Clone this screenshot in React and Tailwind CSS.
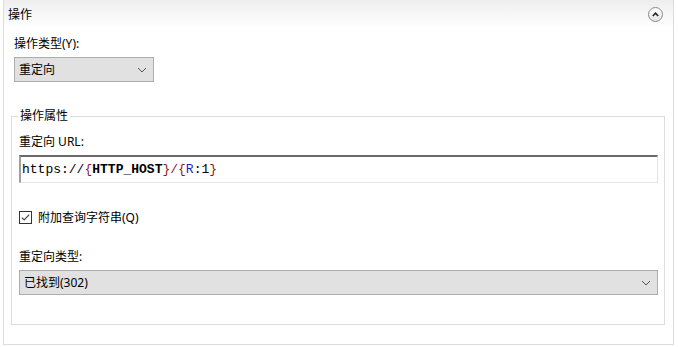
import React from 'react';

const Chevron = ({ className = '' }) => (
  <svg width="10" height="6" viewBox="0 0 10 6" className={className}>
    <path d="M1 1 L5 5 L9 1" fill="none" stroke="#555" strokeWidth="1" />
  </svg>
);

const Select = ({ value, className = '' }) => (
  <div className={`flex items-center justify-between h-[25px] bg-[#e1e1e1] border border-[#adadad] pl-[4px] pr-[6px] ${className}`}>
    <span className="text-[12px] text-black leading-none">{value}</span>
    <Chevron />
  </div>
);

export default function App() {
  return (
    <div
      className="w-[678px] h-[347px] bg-white overflow-hidden"
      style={{ fontFamily: '"Noto Sans", "Noto Sans CJK SC", sans-serif' }}
    >
      <div className="ml-[3px] w-[671px] h-[345px] border border-t-0 border-[#dcdcdc] flex flex-col">
        {/* header */}
        <div className="h-[28px] flex items-center justify-between pl-[4px] pr-[10px] bg-gradient-to-b from-[#eeeeee] to-white">
          <span className="text-[12px] text-black leading-none mt-[2px]">操作</span>
          <div className="w-[15px] h-[15px] rounded-full border border-[#8a8a8a] bg-gradient-to-b from-white to-[#e4e4e4] flex items-center justify-center">
            <svg width="7" height="5" viewBox="0 0 7 5">
              <path d="M0.8 4 L3.5 1.2 L6.2 4" fill="none" stroke="#222" strokeWidth="1.6" />
            </svg>
          </div>
        </div>

        <div className="pl-[10px] pt-[9px]">
          <div className="text-[12px] text-black leading-[14px]">操作类型(Y):</div>
          <Select value="重定向" className="w-[140px] mt-[6px]" />
        </div>

        {/* group box */}
        <div className="relative ml-[7px] mt-[34px] w-[654px] h-[209px] border border-[#dcdcdc]">
          <span className="absolute left-[6px] -top-[8px] bg-white px-[2px] text-[12px] text-black leading-[14px]">操作属性</span>
          <div className="pl-[7px] pr-[6px] pt-[18px]">
            <div className="text-[12px] text-black leading-[14px]">重定向 URL:</div>
            <div className="mt-[6px] h-[28px] border-t-2 border-l-2 border-t-[#696969] border-l-[#a0a0a0] border-r border-b border-r-[#e3e3e3] border-b-[#e3e3e3] flex items-center pl-[1px]">
              <span
                className="text-[13px] leading-none text-black whitespace-pre"
                style={{ fontFamily: '"Liberation Mono", monospace' }}
              >
                https://<span className="text-[#8b1a1a]">{'{'}</span>
                <span className="font-bold">HTTP_HOST</span>
                <span className="text-[#8b1a1a]">{'}/{'}</span>
                <span className="text-[#1f1fbf]">R</span>:1
                <span className="text-[#8b1a1a]">{'}'}</span>
              </span>
            </div>

            <div className="mt-[28px] flex items-center gap-[6px]">
              <svg width="13" height="13" viewBox="0 0 13 13">
                <rect x="0.5" y="0.5" width="12" height="12" fill="white" stroke="#333" />
                <path d="M2.8 6.6 L5.2 9 L10.2 3.6" fill="none" stroke="#444" strokeWidth="1.2" />
              </svg>
              <span className="text-[12px] text-black leading-none">附加查询字符串(Q)</span>
            </div>

            <div className="mt-[26px] text-[12px] text-black leading-[14px]">重定向类型:</div>
            <Select value="已找到(302)" className="mt-[6px]" />
          </div>
        </div>
      </div>
    </div>
  );
}
